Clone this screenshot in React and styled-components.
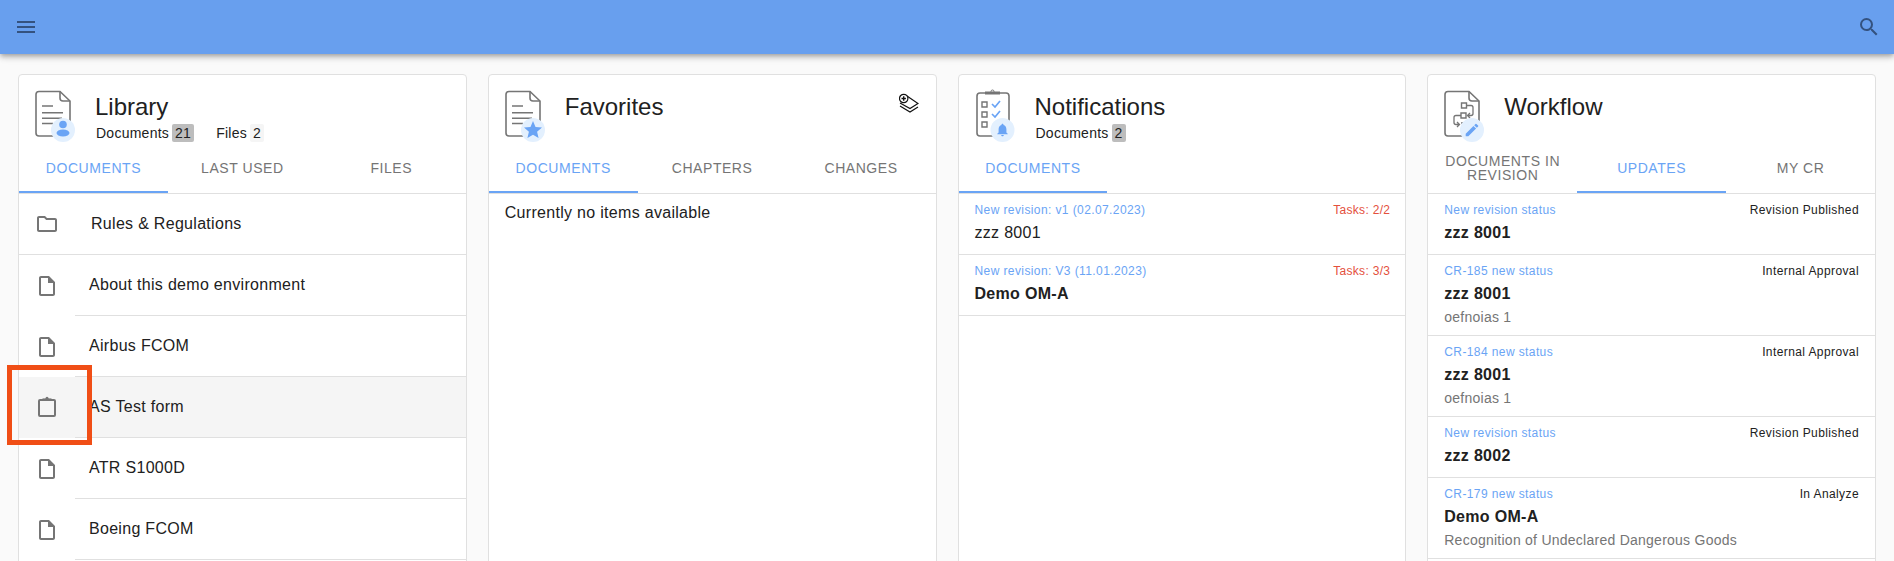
import React from 'react';
import styled, { createGlobalStyle } from 'styled-components';
import { MdMenu, MdSearch, MdOutlineFolder, MdOutlineInsertDriveFile } from 'react-icons/md';

const Global = createGlobalStyle`
  html, body { margin: 0; height: 100%; overflow: hidden; background: #fafafa; }
  body { font-family: "Liberation Sans", Arial, sans-serif; color: #212121; }
`;

const BLUE = '#6aa4f5';

const Page = styled.div`
  position: relative;
  height: 100vh;
  overflow: hidden;
`;

const AppBar = styled.header`
  position: relative;
  z-index: 2;
  height: 54px;
  padding: 0 13px 0 14px;
  display: flex;
  align-items: center;
  justify-content: space-between;
  background: #689fee;
  color: #34527f;
  box-shadow: 0 2px 4px -1px rgba(0,0,0,.2), 0 4px 5px rgba(0,0,0,.14), 0 1px 10px rgba(0,0,0,.12);
  svg { display: block; }
`;

const Board = styled.main`
  display: grid;
  grid-template-columns: repeat(4, 1fr);
  gap: 21px;
  padding: 20px 18px 0;
`;

const Card = styled.section`
  background: #fff;
  border: 1px solid #e0e0e0;
  border-radius: 4px;
  min-height: 600px;
  min-width: 0;
`;

const CardHead = styled.div`
  position: relative;
  height: 65px;
  display: flex;
  padding-left: 13px;
  box-sizing: border-box;
  padding-top: 13px;
`;

const HeadIcon = styled.svg`
  display: block;
  width: 48px;
  height: 56px;
  flex: none;
`;

const HeadText = styled.div`
  margin-left: 15px;
`;

const Title = styled.h2`
  margin: 0;
  padding-top: 4px;
  font-size: 24px;
  line-height: 30px;
  font-weight: 400;
  color: #212121;
`;

const Counters = styled.div`
  display: flex;
  gap: 22px;
  margin-top: 2px;
  padding-left: 1px;
`;

const Counter = styled.span`
  font-size: 14px;
  line-height: 18px;
  letter-spacing: .25px;
  display: flex;
  gap: 3px;
`;

const Count = styled.b`
  font-weight: 400;
  padding: 0 3px;
  border-radius: 2px;
  background: ${p => (p.$filled ? '#bdbdbd' : '#f5f5f5')};
`;

const AddButton = styled.svg`
  position: absolute;
  right: 17px;
  top: 18px;
  width: 20px;
  height: 20px;
`;

const Tabs = styled.div`
  display: flex;
  height: 53px;
  border-bottom: 1px solid #e0e0e0;
`;

const Tab = styled.div`
  width: 33.333%;
  box-sizing: border-box;
  display: flex;
  align-items: center;
  justify-content: center;
  padding: 4px 12px 0;
  text-align: center;
  font-size: 14px;
  line-height: 14px;
  letter-spacing: .55px;
  text-transform: uppercase;
  color: ${p => (p.$active ? BLUE : '#757575')};
  border-bottom: 2px solid ${p => (p.$active ? BLUE : 'transparent')};
`;

const DocRow = styled.div`
  height: 61px;
  box-sizing: border-box;
  display: flex;
  background: ${p => (p.$selected ? '#f5f5f5' : 'transparent')};
  border-bottom: ${p => (p.$inset ? 'none' : '1px solid #e0e0e0')};
`;

const DocIcon = styled.div`
  width: 56px;
  flex: none;
  display: flex;
  align-items: center;
  justify-content: center;
  color: #757575;
  svg { display: block; }
`;

const DocName = styled.div`
  flex: 1;
  display: flex;
  align-items: center;
  padding-left: ${p => (p.$inset ? 14 : 16)}px;
  font-size: 16px;
  letter-spacing: .3px;
  color: #212121;
  border-bottom: ${p => (p.$inset ? '1px solid #e0e0e0' : 'none')};
`;

const EmptyNote = styled.p`
  margin: 0;
  padding: 8px 16px;
  font-size: 16px;
  line-height: 22px;
  letter-spacing: .3px;
`;

const NoticeRow = styled.div`
  padding: 8px 16px 9px;
  border-bottom: 1px solid #e0e0e0;
`;

const NoticeMeta = styled.div`
  display: flex;
  justify-content: space-between;
  font-size: 12px;
  line-height: 16px;
  letter-spacing: .4px;
  margin-bottom: 3px;
  color: ${BLUE};
`;

const NoticeState = styled.span`
  color: ${p => (p.$alert ? '#e4503c' : '#212121')};
  letter-spacing: ${p => (p.$alert ? '.3px' : '.4px')};
  margin-right: ${p => (p.$alert ? '-1px' : '0')};
`;

const NoticeTitle = styled.div`
  font-size: 16px;
  line-height: 24px;
  letter-spacing: .3px;
  font-weight: ${p => (p.$bold ? 700 : 400)};
`;

const NoticeNote = styled.div`
  margin: 1px 0 -1px;
  font-size: 14px;
  line-height: 20px;
  letter-spacing: .25px;
  color: #757575;
`;

const Marker = styled.div`
  position: absolute;
  left: 7px;
  top: 365px;
  width: 85px;
  height: 80px;
  box-sizing: border-box;
  border: 5px solid #f04e16;
  z-index: 3;
`;

const Sheet = () => (
  <>
    <path d="M7 3.5h21l10 9.5v32a3 3 0 0 1-3 3H7a3 3 0 0 1-3-3v-38.500a3 3 0 0 1 3-3z" fill="none" stroke="#757575" strokeWidth="1.6" />
    <path d="M28 3.500v6.500a3 3 0 0 0 3 3h7" fill="none" stroke="#757575" strokeWidth="1.6" />
  </>
);

const TextLines = () => (
  <path d="M10 18h11M10 24.700h21M10 30.300h20M10 35.500h11" stroke="#757575" strokeWidth="1.600" fill="none" />
);

const Bubble = ({ x = 31 }) => <circle cx={x} cy="42" r="12" fill="#e3f0fe" />;

const LibraryIcon = () => (
  <HeadIcon viewBox="0 0 48 56">
    <Sheet /><TextLines /><Bubble />
    <circle cx="31" cy="36.500" r="3.800" fill={BLUE} />
    <ellipse cx="31" cy="45" rx="6.500" ry="3.500" fill={BLUE} />
  </HeadIcon>
);

const FavoritesIcon = () => (
  <HeadIcon viewBox="0 0 48 56">
    <Sheet /><TextLines /><Bubble />
    <path transform="translate(20.200 31.200) scale(.9)" d="M12 17.270 18.180 21l-1.640-7.030L22 9.240l-7.190-.61L12 2 9.190 8.630 2 9.240l5.460 4.730L5.820 21z" fill={BLUE} />
  </HeadIcon>
);

const NotificationsIcon = () => (
  <HeadIcon viewBox="0 0 48 56">
    <rect x="5" y="5" width="32" height="43" rx="3" fill="none" stroke="#757575" strokeWidth="1.600" />
    <path d="M13 5h15" stroke="#757575" strokeWidth="3" />
    <circle cx="20.500" cy="3.500" r="1.500" fill="none" stroke="#757575" />
    <path d="M10 14h5v5h-5zM10 24h5v5h-5zM10 34h5v5h-5z" fill="none" stroke="#757575" strokeWidth="1.400" />
    <path d="M20 16l3 3 5-6M20 26l3 3 5-6" fill="none" stroke={BLUE} strokeWidth="1.700" />
    <Bubble x={30.500} />
    <path transform="translate(22.700 34) scale(.65)" d="M12 22c1.100 0 2-.9 2-2h-4c0 1.100.9 2 2 2zm6-6v-5c0-3.070-1.630-5.640-4.500-6.320V4c0-.83-.67-1.500-1.500-1.500s-1.500.67-1.500 1.500v.68C7.640 5.360 6 7.920 6 11v5l-2 2v1h16v-1l-2-2z" fill={BLUE} />
  </HeadIcon>
);

const WorkflowIcon = () => (
  <HeadIcon viewBox="0 0 48 56">
    <Sheet />
    <path d="M20.500 15h5v5h-5zM20 25h5v5h-5zM20 35h4" fill="none" stroke="#757575" strokeWidth="1.400" />
    <path d="M26 17.500h4a2 2 0 0 1 2 2v6a2 2 0 0 1-2 2h-3M29 25l-2.500 2.500 2.500 2.500M20 27.500h-5a2 2 0 0 0-2 2v5a2 2 0 0 0 2 2h3M16 34l2.500 2.500-2.500 2.500" fill="none" stroke="#757575" strokeWidth="1.300" />
    <Bubble />
    <path transform="translate(22.600 33.600) scale(.7)" d="M3 17.250V21h3.750L17.810 9.940l-3.750-3.750L3 17.250zM20.710 7.040a1 1 0 0 0 0-1.410l-2.340-2.340a1 1 0 0 0-1.410 0l-1.830 1.830 3.750 3.750 1.830-1.830z" fill={BLUE} />
  </HeadIcon>
);

const ClipboardIcon = () => (
  <svg width="24" height="24" viewBox="0 0 24 24" fill="none" stroke="currentColor" strokeWidth="2">
    <path d="M8 4H5a1 1 0 0 0-1 1v14a1 1 0 0 0 1 1h14a1 1 0 0 0 1-1V5a1 1 0 0 0-1-1h-3" />
    <path d="M7.500 3.700h9" strokeWidth="2.600" />
    <circle cx="12" cy="2.300" r="1.500" fill="currentColor" stroke="none" />
  </svg>
);

const documents = [
  { name: 'About this demo environment' },
  { name: 'Airbus FCOM' },
  { name: 'AS Test form', form: true, selected: true },
  { name: 'ATR S1000D' },
  { name: 'Boeing FCOM' },
];

const notifications = [
  { meta: 'New revision: v1 (02.07.2023)', state: 'Tasks: 2/2', title: 'zzz 8001' },
  { meta: 'New revision: V3 (11.01.2023)', state: 'Tasks: 3/3', title: 'Demo OM-A', bold: true },
];

const updates = [
  { meta: 'New revision status', state: 'Revision Published', title: 'zzz 8001' },
  { meta: 'CR-185 new status', state: 'Internal Approval', title: 'zzz 8001', note: 'oefnoias 1' },
  { meta: 'CR-184 new status', state: 'Internal Approval', title: 'zzz 8001', note: 'oefnoias 1' },
  { meta: 'New revision status', state: 'Revision Published', title: 'zzz 8002' },
  { meta: 'CR-179 new status', state: 'In Analyze', title: 'Demo OM-A', note: 'Recognition of Undeclared Dangerous Goods' },
];

export default function App() {
  return (
    <Page>
      <Global />
      <AppBar>
        <MdMenu size={24} />
        <MdSearch size={24} />
      </AppBar>
      <Board>
        <Card>
          <CardHead>
            <LibraryIcon />
            <HeadText>
              <Title>Library</Title>
              <Counters>
                <Counter>Documents <Count $filled>21</Count></Counter>
                <Counter>Files <Count>2</Count></Counter>
              </Counters>
            </HeadText>
          </CardHead>
          <Tabs>
            <Tab $active>Documents</Tab>
            <Tab>Last used</Tab>
            <Tab>Files</Tab>
          </Tabs>
          <DocRow>
            <DocIcon><MdOutlineFolder size={24} /></DocIcon>
            <DocName>Rules &amp; Regulations</DocName>
          </DocRow>
          {documents.map(doc => (
            <DocRow key={doc.name} $inset $selected={doc.selected}>
              <DocIcon>{doc.form ? <ClipboardIcon /> : <MdOutlineInsertDriveFile size={24} />}</DocIcon>
              <DocName $inset>{doc.name}</DocName>
            </DocRow>
          ))}
        </Card>

        <Card>
          <CardHead>
            <FavoritesIcon />
            <HeadText>
              <Title>Favorites</Title>
            </HeadText>
            <AddButton viewBox="0 0 20 20" fill="none" stroke="#111" strokeWidth="1.200">
              <path d="M8 3l11 7.500-8 5L1 10" />
              <path d="M1 13l10 6 8-5" />
              <circle cx="4.700" cy="5.500" r="4.200" fill="#fff" />
              <path d="M2.500 5.500h4.400M4.700 3.300v4.400" strokeWidth="1.400" />
            </AddButton>
          </CardHead>
          <Tabs>
            <Tab $active>Documents</Tab>
            <Tab>Chapters</Tab>
            <Tab>Changes</Tab>
          </Tabs>
          <EmptyNote>Currently no items available</EmptyNote>
        </Card>

        <Card>
          <CardHead>
            <NotificationsIcon />
            <HeadText>
              <Title>Notifications</Title>
              <Counters>
                <Counter>Documents <Count $filled>2</Count></Counter>
              </Counters>
            </HeadText>
          </CardHead>
          <Tabs>
            <Tab $active>Documents</Tab>
          </Tabs>
          {notifications.map(item => (
            <NoticeRow key={item.title}>
              <NoticeMeta>
                <span>{item.meta}</span>
                <NoticeState $alert>{item.state}</NoticeState>
              </NoticeMeta>
              <NoticeTitle $bold={item.bold}>{item.title}</NoticeTitle>
            </NoticeRow>
          ))}
        </Card>

        <Card>
          <CardHead>
            <WorkflowIcon />
            <HeadText>
              <Title>Workflow</Title>
            </HeadText>
          </CardHead>
          <Tabs>
            <Tab>Documents in revision</Tab>
            <Tab $active>Updates</Tab>
            <Tab>My CR</Tab>
          </Tabs>
          {updates.map(item => (
            <NoticeRow key={item.meta}>
              <NoticeMeta>
                <span>{item.meta}</span>
                <NoticeState>{item.state}</NoticeState>
              </NoticeMeta>
              <NoticeTitle $bold>{item.title}</NoticeTitle>
              {item.note && <NoticeNote>{item.note}</NoticeNote>}
            </NoticeRow>
          ))}
        </Card>
      </Board>
      <Marker />
    </Page>
  );
}
